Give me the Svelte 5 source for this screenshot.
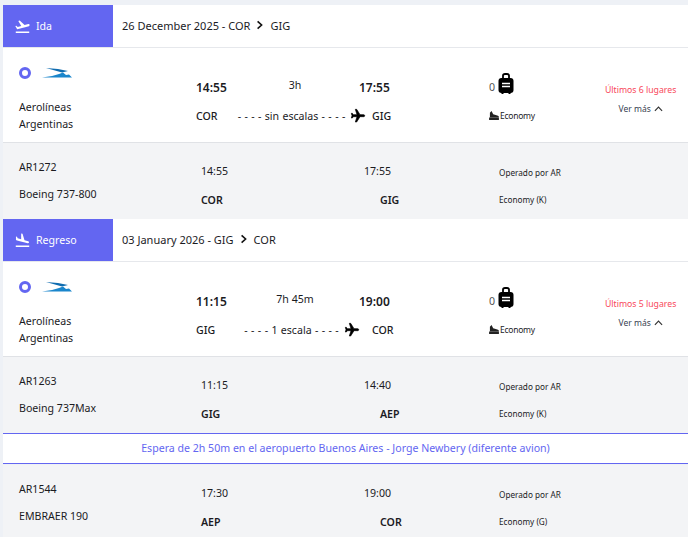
<script>
	const legs = [
		{
			kind: 'Ida',
			title: '26 December 2025 - COR',
			to: 'GIG',
			dep: '14:55',
			arr: '17:55',
			dur: '3h',
			from: 'COR',
			dest: 'GIG',
			stops: '- - - - sin escalas - - - -',
			seats: 'Últimos 6 lugares',
			segments: [
				{ code: 'AR1272', plane: 'Boeing 737-800', dep: '14:55', arr: '17:55', from: 'COR', to: 'GIG', fare: 'Economy (K)' }
			],
			wait: ''
		},
		{
			kind: 'Regreso',
			title: '03 January 2026 - GIG',
			to: 'COR',
			dep: '11:15',
			arr: '19:00',
			dur: '7h 45m',
			from: 'GIG',
			dest: 'COR',
			stops: '- - - - 1 escala - - - -',
			seats: 'Últimos 5 lugares',
			segments: [
				{ code: 'AR1263', plane: 'Boeing 737Max', dep: '11:15', arr: '14:40', from: 'GIG', to: 'AEP', fare: 'Economy (K)' },
				{ code: 'AR1544', plane: 'EMBRAER 190', dep: '17:30', arr: '19:00', from: 'AEP', to: 'COR', fare: 'Economy (G)' }
			],
			wait: 'Espera de 2h 50m en el aeropuerto Buenos Aires - Jorge Newbery (diferente avion)'
		}
	];
</script>

<main>
	{#each legs as leg}
		<header class="head">
			<div class="tag">
				{#if leg.kind === 'Ida'}
					<svg viewBox="0 0 24 24" width="17" height="17"><path d="M2.5 19h19v2h-19zm19.57-9.36c-.21-.8-1.04-1.28-1.84-1.06L14.92 10l-6.9-6.43-1.93.51 4.14 7.17-4.97 1.33-1.97-1.54-1.45.39 1.82 3.16.77 1.33 1.6-.43 5.31-1.42 4.35-1.16L21 11.49c.81-.23 1.28-1.05 1.07-1.85z"/></svg>
				{:else}
					<svg viewBox="0 0 24 24" width="17" height="17"><path d="M2.5 19h19v2h-19zm7.18-5.73l4.35 1.16 5.31 1.42c.8.21 1.62-.26 1.84-1.06.21-.8-.26-1.62-1.06-1.84l-5.31-1.42-2.76-9.02L10.12 2v8.28L5.15 8.95l-.93-2.32-1.45-.39v5.17l1.6.43 5.31 1.43z"/></svg>
				{/if}
				<span>{leg.kind}</span>
			</div>
			<div class="title">
				<span>{leg.title}</span>
				<svg viewBox="0 0 10 12" width="8" height="10"><path d="M2 1.5 7 6 2 10.5" fill="none" stroke="#111" stroke-width="2"/></svg>
				<span>{leg.to}</span>
			</div>
		</header>

		<section class="flight">
			<div class="airline">
				<div class="brand">
					<span class="radio"></span>
					<svg class="logo" viewBox="0 0 30 10" width="30" height="10">
						<path d="M4 0 L16 1 L26 3 L20 4.6 Z" fill="#0f6cb0"/>
						<path d="M0 9.6 Q9 9 17 6 L21 4.4 L24 7 L27 6.4 L30 9.6 Z" fill="#1a86cc"/>
					</svg>
				</div>
				<div class="name">Aerolíneas<br />Argentinas</div>
			</div>

			<div class="times">
				<div class="top">
					<b>{leg.dep}</b>
					<span class="dur">{leg.dur}</span>
					<b class="arr">{leg.arr}</b>
				</div>
				<div class="route">
					<span class="code">{leg.from}</span>
					<span class="stops">
						{leg.stops}
						<svg viewBox="0 0 24 24" width="16" height="16"><path transform="rotate(90 12 12)" stroke="#000" stroke-width="1" d="M21 16v-2l-8-5V3.5c0-.83-.67-1.5-1.5-1.5S10 2.67 10 3.5V9l-8 5v2l8-2.5V19l-2 1.5V22l3.5-1 3.5 1v-1.5L13 19v-5.5l8 2.5z"/></svg>
					</span>
					<span class="code">{leg.dest}</span>
				</div>
			</div>

			<div class="cabin">
				<div class="bag">
					<span>0</span>
					<svg viewBox="0 0 16 21" width="16" height="21">
						<path d="M5 6V2.6C5 1.4 5.9 1 7 1h2c1.1 0 2 .4 2 1.6V6" fill="none" stroke="#000" stroke-width="1.8"/>
						<rect x="0.5" y="5" width="15" height="15" rx="3"/>
						<path d="M3.5 19h2v2h-2zM10.5 19h2v2h-2z"/>
						<path d="M4 10.5h8M4 13.5h8" stroke="#fff" stroke-width="1.4"/>
					</svg>
				</div>
				<div class="fare">
					<svg viewBox="0 0 12 11" width="10" height="9"><path d="M0 8h12v3H0zM1 2l2-2 2 4 5 1.5c1 .3 2 1 2 2H1z" fill="#222"/></svg>
					<span>Economy</span>
				</div>
			</div>

			<div class="more">
				<div class="seats">{leg.seats}</div>
				<div class="toggle">
					<span>Ver más</span>
					<svg viewBox="0 0 10 6" width="9" height="6"><path d="M1 5 5 1l4 4" fill="none" stroke="#333" stroke-width="1.3"/></svg>
				</div>
			</div>
		</section>

		{#each leg.segments as seg, i}
			{#if i > 0}
				<div class="wait">{leg.wait}</div>
			{/if}
			<section class="detail">
				<div class="plane">
					<div>{seg.code}</div>
					<div>{seg.plane}</div>
				</div>
				<div class="col-dep">
					<div>{seg.dep}</div>
					<div class="iata">{seg.from}</div>
				</div>
				<div class="col-arr">
					<div>{seg.arr}</div>
					<div class="iata">{seg.to}</div>
				</div>
				<div class="col-op">
					<div>Operado por AR</div>
					<div>{seg.fare}</div>
				</div>
			</section>
		{/each}
	{/each}
</main>

<style>
	:global(body) {
		background: #eef1f6;
		overflow: hidden;
	}

	main {
		height: 537px;
		overflow: hidden;
		padding: 5px 0 0 3px;
		box-sizing: border-box;
		font-family: "Noto Sans", "Open Sans", sans-serif;
		font-size: 10.6px;
		color: #1b1b1f;
	}

	.head {
		display: flex;
		height: 42px;
		background: #fff;
		box-sizing: content-box;
		border-bottom: 1px solid #e6e8ec;
	}

	.tag {
		width: 110px;
		display: flex;
		align-items: center;
		gap: 5px;
		padding-left: 11px;
		box-sizing: border-box;
		background: #6366f1;
		color: #fff;
	}

	.tag svg {
		fill: #fff;
	}

	.title {
		display: flex;
		align-items: center;
		gap: 6px;
		padding: 0 0 2px 9px;
		font-size: 11px;
	}

	.flight {
		display: grid;
		grid-template-columns: 177px 293px 116px 1fr;
		height: 94px;
		background: #fff;
		padding-left: 16px;
		border-bottom: 1px solid #e0e2e6;
		box-sizing: content-box;
	}

	.brand {
		display: flex;
		align-items: center;
		gap: 11px;
		padding-top: 19px;
	}

	.radio {
		width: 6px;
		height: 6px;
		border: 3.5px solid #6366f1;
		border-radius: 50%;
	}

	.name {
		margin-top: 20px;
		line-height: 17px;
	}

	.times {
		padding-top: 30px;
	}

	.top {
		display: grid;
		grid-template-columns: 49px 100px 14px auto;
		align-items: center;
		height: 18px;
	}

	.top b {
		font-size: 12px;
		font-weight: 600;
	}

	.top .arr {
		grid-column: 4;
	}

	.dur {
		text-align: center;
		margin-top: -4px;
	}

	.route {
		display: grid;
		grid-template-columns: 36px 140px auto;
		align-items: center;
		margin-top: 11px;
		height: 18px;
	}

	.code {
		font-weight: 500;
	}

	.stops {
		display: flex;
		align-items: center;
		justify-content: center;
		gap: 5px;
		white-space: nowrap;
		word-spacing: 0.6px;
	}

	.cabin {
		padding-top: 24px;
	}

	.bag {
		display: flex;
		align-items: flex-end;
		gap: 3px;
		height: 22px;
		color: #555;
	}

	.fare {
		display: flex;
		align-items: center;
		gap: 1px;
		margin-top: 16px;
		font-size: 8.5px;
		letter-spacing: -0.25px;
	}

	.more {
		padding-top: 36px;
		text-align: center;
		font-size: 8.5px;
		white-space: nowrap;
		padding-right: 14px;
	}

	.seats {
		color: #f8475a;
		font-size: 8.7px;
	}

	.toggle {
		display: flex;
		align-items: center;
		justify-content: center;
		gap: 3px;
		margin-top: 7px;
		color: #374151;
	}

	.detail {
		display: grid;
		grid-template-columns: 182px 163px 135px 1fr;
		height: 76px;
		padding-left: 16px;
		background: #f3f4f6;
		box-sizing: border-box;
	}

	.plane {
		padding-top: 17px;
		line-height: 14px;
		display: flex;
		flex-direction: column;
		gap: 13px;
	}

	.col-dep,
	.col-arr {
		padding-top: 21px;
		display: flex;
		flex-direction: column;
		gap: 15px;
		line-height: 14px;
	}

	.iata {
		font-weight: 600;
	}

	.col-arr .iata {
		padding-left: 16px;
	}

	.col-op {
		padding-top: 24px;
		font-size: 8.2px;
		line-height: 12px;
		display: flex;
		flex-direction: column;
		gap: 15px;
	}

	.wait {
		height: 29px;
		line-height: 29px;
		text-align: center;
		background: #fff;
		color: #6366f1;
		border-top: 1px solid #6366f1;
		border-bottom: 1px solid #6366f1;
		margin-bottom: 1px;
	}
</style>
